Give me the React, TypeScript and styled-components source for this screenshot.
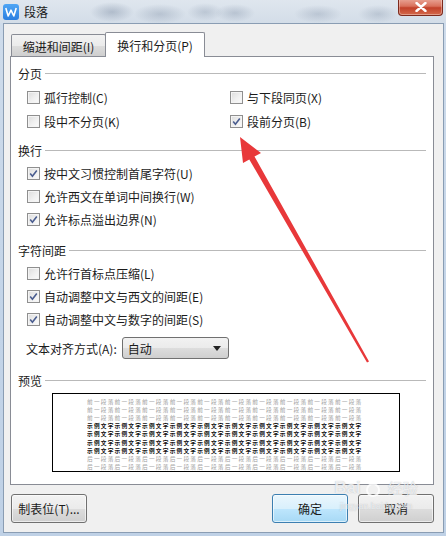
import React from "react";
import styled, { createGlobalStyle } from "styled-components";

const Global = createGlobalStyle`
  html, body { margin: 0; padding: 0; background: #fff; }
  body {
    font-family: "Noto Sans CJK SC", "Microsoft YaHei", sans-serif;
    font-size: 12px;
    color: #1b1b1b;
  }
  * { box-sizing: border-box; }
`;

const Window = styled.div`
  position: relative;
  width: 446px;
  height: 536px;
  display: flex;
  flex-direction: column;
  overflow: hidden;
  background: linear-gradient(180deg, #cfdceb 0%, #c3d4e8 60%, #bfd1e6 100%);
`;

const TitleBar = styled.div`
  height: 23px;
  flex: none;
  display: flex;
  align-items: center;
  padding-left: 3px;
  gap: 5px;
  background:
    radial-gradient(ellipse 22px 10px at 112px 12px, rgba(70, 90, 120, 0.28), transparent),
    radial-gradient(ellipse 26px 10px at 160px 14px, rgba(70, 90, 120, 0.22), transparent),
    radial-gradient(ellipse 18px 9px at 205px 12px, rgba(70, 90, 120, 0.2), transparent),
    radial-gradient(ellipse 20px 9px at 235px 13px, rgba(70, 90, 120, 0.22), transparent),
    radial-gradient(ellipse 24px 9px at 318px 14px, rgba(70, 90, 120, 0.2), transparent),
    radial-gradient(ellipse 20px 9px at 378px 14px, rgba(70, 90, 120, 0.2), transparent),
    linear-gradient(180deg, #dfe6ee 0%, #d3dde8 100%);
`;

const AppIcon = styled.div`
  width: 16px;
  height: 16px;
  border-radius: 3px;
  background: linear-gradient(180deg, #4fa6f5 0%, #2b7fe0 100%);
  display: flex;
  align-items: center;
  justify-content: center;
`;

const TitleText = styled.span`
  font-size: 12px;
  color: #1a1a1a;
  margin-top: -1px;
`;

const CloseButton = styled.div`
  position: absolute;
  top: -1px;
  right: 3px;
  width: 45px;
  height: 17px;
  border: 1px solid #7d2a1d;
  border-top: none;
  border-radius: 0 0 4px 4px;
  background: linear-gradient(180deg, #e9a596 0%, #d9715c 45%, #c2412a 55%, #d46a4c 100%);
  box-shadow: inset 0 0 0 1px rgba(255, 255, 255, 0.35);
  display: flex;
  align-items: center;
  justify-content: center;
`;

const Client = styled.div`
  flex: 1;
  margin: 0 2px 3px 3px;
  border: 1px solid #8a9db3;
  background: #f0f0f0;
  padding: 8px 9px 9px 6px;
  display: flex;
  flex-direction: column;
`;

const TabBar = styled.div`
  display: flex;
  align-items: flex-end;
  height: 25px;
  margin-bottom: -1px;
  padding-left: 1px;
  position: relative;
  z-index: 1;
`;

const Tab = styled.div<{ $active?: boolean; $w: number }>`
  width: ${(p) => p.$w}px;
  height: ${(p) => (p.$active ? 25 : 22)}px;
  margin-bottom: ${(p) => (p.$active ? 0 : 1)}px;
  margin-left: ${(p) => (p.$active ? -1 : 0)}px;
  border: 1px solid #898c95;
  border-bottom: none;
  border-radius: 2px 2px 0 0;
  background: ${(p) =>
    p.$active ? "#ffffff" : "linear-gradient(180deg, #f2f2f2 0%, #ebebeb 50%, #dddddd 51%, #cfcfcf 100%)"};
  display: flex;
  align-items: center;
  justify-content: center;
  padding-top: ${(p) => (p.$active ? 0 : 1)}px;
  font-size: 12px;
  color: #1b1b1b;
`;

const Panel = styled.div`
  flex: 1;
  border: 1px solid #898c95;
  background: #ffffff;
  padding: 8px 7px 0 7px;
  display: flex;
  flex-direction: column;
`;

const Heading = styled.div<{ $mt: number }>`
  height: 16px;
  margin-top: ${(p) => p.$mt}px;
  display: flex;
  align-items: center;
  gap: 3px;
  font-size: 12px;
  color: #1b1b1b;
  &::after {
    content: "";
    flex: 1;
    height: 0;
    border-top: 1px solid #b9b9b9;
    margin-top: 1px;
  }
`;

const Rows = styled.div<{ $cols?: boolean; $h: number }>`
  margin-top: 4px;
  display: grid;
  grid-template-columns: ${(p) => (p.$cols ? "203px 1fr" : "1fr")};
  grid-auto-rows: ${(p) => p.$h}px;
  padding-left: 9px;
`;

const Row = styled.label`
  display: flex;
  align-items: center;
  gap: 4px;
  font-size: 12px;
  color: #1b1b1b;
  white-space: nowrap;
`;

const Box = styled.span`
  width: 13px;
  height: 13px;
  flex: none;
  border: 1px solid #8f8f8f;
  background: linear-gradient(135deg, #dcdcdc 0%, #f0f0f0 55%, #fbfbfb 100%);
  box-shadow: inset 0 0 0 1px #f4f4f4;
  display: flex;
  align-items: center;
  justify-content: center;
`;

const SelectRow = styled.div`
  margin-top: 6px;
  height: 22px;
  display: flex;
  align-items: center;
  padding-left: 8px;
  gap: 4px;
  font-size: 12px;
  color: #1b1b1b;
`;

const Select = styled.div`
  width: 107px;
  height: 22px;
  margin-left: 1px;
  border: 1px solid #707070;
  border-radius: 3px;
  background: linear-gradient(180deg, #f2f2f2 0%, #ebebeb 50%, #dddddd 51%, #cfcfcf 100%);
  display: flex;
  align-items: center;
  justify-content: space-between;
  padding: 0 7px 0 5px;
  font-size: 12px;
  color: #1b1b1b;
`;

const Preview = styled.div`
  margin-top: 5px;
  margin-left: 34px;
  width: 348px;
  height: 79px;
  border: 1px solid #000;
  background: #fff;
  padding-top: 4px;
  display: flex;
  flex-direction: column;
  align-items: center;
  overflow: hidden;
`;

const PreviewLine = styled.div<{ $dark?: boolean }>`
  width: 278px;
  font-size: 5.7px;
  letter-spacing: 1.2px;
  line-height: 8.4px;
  height: 8.4px;
  white-space: nowrap;
  overflow: hidden;
  color: ${(p) => (p.$dark ? "#111" : "#a0a0a0")};
  font-weight: ${(p) => (p.$dark ? 700 : 400)};
`;

const ButtonRow = styled.div`
  margin-top: 9px;
  height: 29px;
  display: flex;
  align-items: stretch;
  gap: 10px;
  padding-left: 1px;
`;

const Spacer = styled.div`
  flex: 1;
`;

const Button = styled.div<{ $default?: boolean }>`
  width: 76px;
  border: 1px solid ${(p) => (p.$default ? "#3c7fb1" : "#707070")};
  border-radius: 3px;
  background: ${(p) =>
    p.$default
      ? "linear-gradient(180deg, #eaf6fd 0%, #d9f0fc 50%, #bee6fd 51%, #a7d9f5 100%)"
      : "linear-gradient(180deg, #f2f2f2 0%, #ebebeb 50%, #dddddd 51%, #cfcfcf 100%)"};
  box-shadow: inset 0 0 0 1px rgba(255, 255, 255, 0.6);
  display: flex;
  align-items: center;
  justify-content: center;
  font-size: 12px;
  color: #1b1b1b;
`;

const Overlay = styled.svg`
  position: absolute;
  left: 0;
  top: 0;
  pointer-events: none;
`;

const Watermark = styled.div`
  position: absolute;
  left: 326px;
  top: 478px;
  width: 100px;
  display: flex;
  flex-direction: column;
  align-items: center;
  pointer-events: none;
  color: rgba(255, 255, 255, 0.75);
  text-shadow: 0 0 1px rgba(120, 130, 140, 0.55);
`;

const WmTop = styled.div`
  display: flex;
  align-items: flex-end;
  gap: 2px;
  font-family: "Liberation Sans", Arial, sans-serif;
  font-weight: 700;
  font-size: 17px;
  line-height: 20px;
`;

const WmCn = styled.span`
  font-family: "Noto Sans CJK SC", sans-serif;
  font-size: 15px;
  font-weight: 400;
  margin-left: 3px;
`;

const WmUrl = styled.div`
  font-family: "Liberation Sans", Arial, sans-serif;
  font-size: 9px;
  line-height: 11px;
  margin-top: 3px;
  color: rgba(255, 255, 255, 0.7);
`;

const Check = ({ on }: { on?: boolean }) => (
  <Box>
    {on && (
      <svg width="9" height="9" viewBox="0 0 9 9">
        <path d="M1.2 4.6 L3.4 7.2 L7.8 1.4" fill="none" stroke="#4a5d8f" strokeWidth="1.6" />
      </svg>
    )}
  </Box>
);

const Item = ({ on, children }: { on?: boolean; children: React.ReactNode }) => (
  <Row>
    <Check on={on} />
    <span>{children}</span>
  </Row>
);

const prev = "前一段落".repeat(10);
const sample = "示例文字".repeat(10);
const next = "后一段落".repeat(10);

export default function App() {
  return (
    <>
      <Global />
      <Window>
        <TitleBar>
          <AppIcon>
            <svg width="12" height="10" viewBox="0 0 12 10">
              <path d="M0.8 1 L3.2 9 L6 3.2 L8.8 9 L11.2 1" fill="none" stroke="#fff" strokeWidth="1.6" strokeLinejoin="round" />
            </svg>
          </AppIcon>
          <TitleText>段落</TitleText>
        </TitleBar>
        <CloseButton>
          <svg width="12" height="10" viewBox="0 0 12 10">
            <path d="M1.5 1 L10.5 9 M10.5 1 L1.5 9" stroke="#fff" strokeWidth="2.4" strokeLinecap="round" />
          </svg>
        </CloseButton>
        <Client>
          <TabBar>
            <Tab $w={95}>缩进和间距(I)</Tab>
            <Tab $w={100} $active>
              换行和分页(P)
            </Tab>
          </TabBar>
          <Panel>
            <Heading $mt={0}>分页</Heading>
            <Rows $cols $h={24}>
              <Item>孤行控制(C)</Item>
              <Item>与下段同页(X)</Item>
              <Item>段中不分页(K)</Item>
              <Item on>段前分页(B)</Item>
            </Rows>
            <Heading $mt={9}>换行</Heading>
            <Rows $h={23}>
              <Item on>按中文习惯控制首尾字符(U)</Item>
              <Item>允许西文在单词中间换行(W)</Item>
              <Item on>允许标点溢出边界(N)</Item>
            </Rows>
            <Heading $mt={11}>字符间距</Heading>
            <Rows $h={23}>
              <Item>允许行首标点压缩(L)</Item>
              <Item on>自动调整中文与西文的间距(E)</Item>
              <Item on>自动调整中文与数字的间距(S)</Item>
            </Rows>
            <SelectRow>
              <span>文本对齐方式(A):</span>
              <Select>
                <span>自动</span>
                <svg width="8" height="5" viewBox="0 0 8 5">
                  <path d="M0 0 L8 0 L4 5 Z" fill="#222" />
                </svg>
              </Select>
            </SelectRow>
            <Heading $mt={13}>预览</Heading>
            <Preview>
              <PreviewLine>{prev}</PreviewLine>
              <PreviewLine>{prev}</PreviewLine>
              <PreviewLine>{prev}</PreviewLine>
              <PreviewLine $dark>{sample}</PreviewLine>
              <PreviewLine $dark>{sample}</PreviewLine>
              <PreviewLine $dark>{sample}</PreviewLine>
              <PreviewLine $dark>{sample}</PreviewLine>
              <PreviewLine>{next}</PreviewLine>
              <PreviewLine>{next}</PreviewLine>
            </Preview>
          </Panel>
          <ButtonRow>
            <Button>制表位(T)...</Button>
            <Spacer />
            <Button $default>确定</Button>
            <Button>取消</Button>
          </ButtonRow>
        </Client>
        <Watermark>
          <WmTop>
            <span>Bai</span>
            <svg width="20" height="20" viewBox="0 0 20 20">
              <circle cx="10" cy="12" r="6" fill="none" stroke="rgba(255,255,255,0.8)" strokeWidth="2" />
              <circle cx="5" cy="4" r="2" fill="rgba(255,255,255,0.8)" />
              <circle cx="10" cy="2.5" r="2" fill="rgba(255,255,255,0.8)" />
              <circle cx="15" cy="4" r="2" fill="rgba(255,255,255,0.8)" />
            </svg>
            <WmCn>经验</WmCn>
          </WmTop>
          <WmUrl>jingyan.baidu.com</WmUrl>
        </Watermark>
        <Overlay width="446" height="536" viewBox="0 0 446 536">
          <polygon
            points="240,137 261,153 254.5,156.4 369,361.5 367,362.5 249.3,159.4 243,163"
            fill="#e8383a"
          />
        </Overlay>
      </Window>
    </>
  );
}
